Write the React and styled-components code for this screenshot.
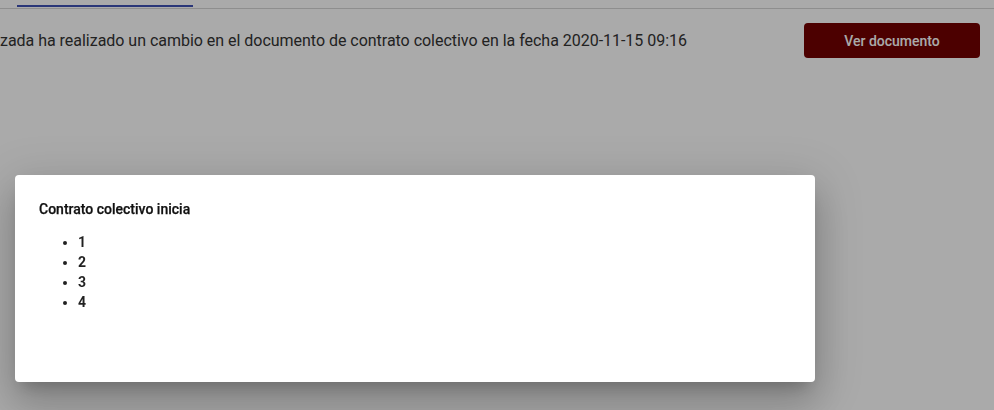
import React from "react";
import styled, { createGlobalStyle } from "styled-components";

const Global = createGlobalStyle`
  html, body { margin: 0; padding: 0; background: #fff; }
  body { font-family: Roboto, "Noto Sans", Arial, sans-serif; width: 994px; height: 410px; overflow: hidden; }
`;

const Page = styled.div`
  width: 994px;
  height: 410px;
  position: relative;
  background: #fff;
`;

const TabBar = styled.div`
  height: 8px;
  border-bottom: 1px solid #d6d6d6;
  position: relative;
`;

const Indicator = styled.div`
  position: absolute;
  left: 17px;
  bottom: 1px;
  width: 176px;
  height: 2px;
  background: #3f51b5;
`;

const Row = styled.div`
  display: flex;
  align-items: center;
  justify-content: space-between;
  margin-top: 14px;
  padding-right: 14px;
`;

const Message = styled.div`
  font-size: 16px;
  color: #333;
  white-space: nowrap;
  letter-spacing: -0.025px;
`;

const Button = styled.button`
  width: 176px;
  height: 35px;
  border: none;
  border-radius: 4px;
  background: #730000;
  color: #fff;
  font-family: Roboto, Arial, sans-serif;
  font-size: 14px;
  font-weight: 500;
  cursor: pointer;
`;

const Backdrop = styled.div`
  position: fixed;
  inset: 0;
  background: rgba(0, 0, 0, 0.335);
`;

const Dialog = styled.div`
  position: absolute;
  left: 15px;
  top: 175px;
  width: 800px;
  height: 207px;
  box-sizing: border-box;
  background: #fff;
  border-radius: 4px;
  padding: 25px 24px;
  box-shadow: 0px 11px 15px -7px rgba(0,0,0,0.2), 0px 24px 38px 3px rgba(0,0,0,0.14), 0px 9px 46px 8px rgba(0,0,0,0.12);
  color: rgba(0, 0, 0, 0.87);
`;

const Title = styled.div`
  font-size: 14px;
  font-weight: 500;
  line-height: 18px;
  color: #111;
  -webkit-text-stroke: 0.25px #111;
`;

const List = styled.ul`
  margin: 14px 0 0;
  padding-left: 39px;
  font-size: 14px;
  font-weight: 700;
  line-height: 20px;
`;

export default function App() {
  return (
    <Page>
      <Global />
      <TabBar>
        <Indicator />
      </TabBar>
      <Row>
        <Message>zada ha realizado un cambio en el documento de contrato colectivo en la fecha 2020-11-15 09:16</Message>
        <Button>Ver documento</Button>
      </Row>
      <Backdrop />
      <Dialog>
        <Title>Contrato colectivo inicia</Title>
        <List>
          <li>1</li>
          <li>2</li>
          <li>3</li>
          <li>4</li>
        </List>
      </Dialog>
    </Page>
  );
}
